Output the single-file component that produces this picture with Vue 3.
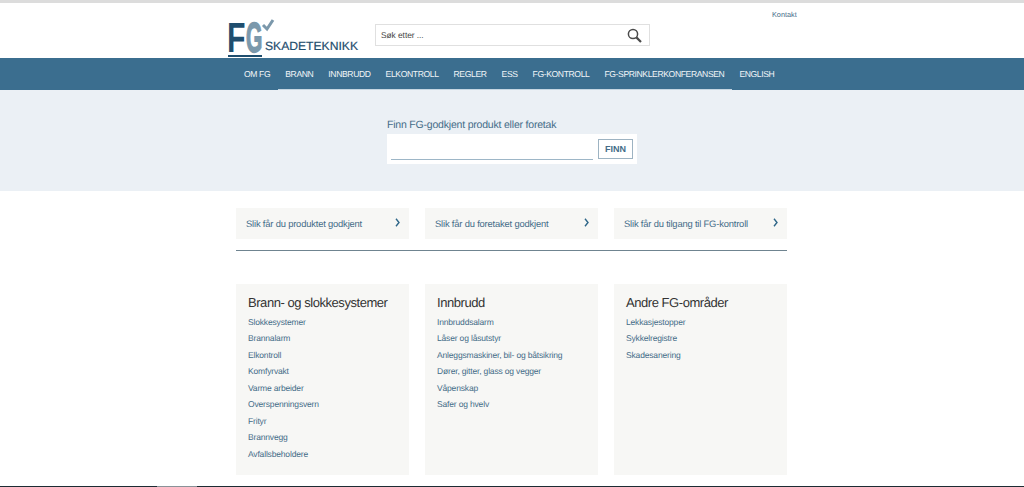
<template>
  <div class="page">
    <header class="top">
      <a class="logo" href="#">
        <svg width="135" height="50" viewBox="0 -6 135 50">
          <text transform="translate(-1 33) scale(0.72 1)" class="logo-f">F</text>
          <text transform="translate(18 33) scale(0.5 1)" class="logo-g">G</text>
          <rect x="0" y="36" width="34" height="2" fill="#1f4e6e" />
          <path d="M35 6 L39 10 L45 1" fill="none" stroke="#7b98ab" stroke-width="3" />
          <text x="37" y="31" class="logo-word" textLength="93" lengthAdjust="spacingAndGlyphs">SKADETEKNIKK</text>
        </svg>
      </a>
      <div class="search">
        <span>Søk etter ...</span>
        <svg width="15" height="15" viewBox="0 0 15 15">
          <circle cx="6" cy="6" r="4.6" fill="none" stroke="#4a4a4a" stroke-width="1.5" />
          <path d="M9.4 9.4 L14 14" stroke="#4a4a4a" stroke-width="2.2" />
        </svg>
      </div>
      <a class="kontakt" href="#">Kontakt</a>
    </header>

    <nav class="nav">
      <a v-for="item in navItems" :key="item" href="#" :class="{ marked: item !== 'OM FG' && item !== 'ENGLISH' }">{{ item }}</a>
    </nav>

    <section class="hero">
      <label>Finn FG-godkjent produkt eller foretak</label>
      <div class="finder">
        <div class="finder-input"></div>
        <button type="button">FINN</button>
      </div>
    </section>

    <main class="content">
      <div class="shortcuts">
        <a v-for="s in shortcuts" :key="s" href="#" class="shortcut">
          <span>{{ s }}</span>
          <svg width="5" height="9" viewBox="0 0 5 9">
            <path d="M1 0.8 L4 4.5 L1 8.2" fill="none" stroke="#2f6688" stroke-width="1.4" />
          </svg>
        </a>
      </div>
      <div class="rule"></div>
      <div class="areas">
        <div v-for="a in areas" :key="a.title" class="area">
          <h2>{{ a.title }}</h2>
          <a v-for="l in a.links" :key="l" href="#">{{ l }}</a>
        </div>
      </div>
    </main>

    <div class="bottom"><i></i></div>
  </div>
</template>

<script setup>
const navItems = ['OM FG', 'BRANN', 'INNBRUDD', 'ELKONTROLL', 'REGLER', 'ESS', 'FG-KONTROLL', 'FG-SPRINKLERKONFERANSEN', 'ENGLISH']

const shortcuts = [
  'Slik får du produktet godkjent',
  'Slik får du foretaket godkjent',
  'Slik får du tilgang til FG-kontroll'
]

const areas = [
  {
    title: 'Brann- og slokkesystemer',
    links: ['Slokkesystemer', 'Brannalarm', 'Elkontroll', 'Komfyrvakt', 'Varme arbeider', 'Overspenningsvern', 'Frityr', 'Brannvegg', 'Avfallsbeholdere']
  },
  {
    title: 'Innbrudd',
    links: ['Innbruddsalarm', 'Låser og låsutstyr', 'Anleggsmaskiner, bil- og båtsikring', 'Dører, gitter, glass og vegger', 'Våpenskap', 'Safer og hvelv']
  },
  {
    title: 'Andre FG-områder',
    links: ['Lekkasjestopper', 'Sykkelregistre', 'Skadesanering']
  }
]
</script>

<style>
html, body {
  margin: 0;
  height: 487px;
  overflow: hidden;
  background: #fff;
}
</style>

<style scoped>
.page {
  height: 487px;
  display: flex;
  flex-direction: column;
  font-family: "Liberation Sans", Arial, sans-serif;
  text-rendering: geometricPrecision;
  border-top: 3px solid #dcdcdc;
  box-sizing: border-box;
  color: #446c88;
}

a {
  color: inherit;
  text-decoration: none;
}

.top {
  height: 55px;
  display: flex;
  padding-left: 228px;
}

.logo {
  width: 147px;
  height: 45px;
  padding-top: 10px;
}

.logo svg {
  display: block;
  overflow: visible;
}

.logo-f {
  font: bold 42px "Liberation Sans", sans-serif;
  fill: #1f4e6e;
}

.logo-g {
  font: bold 42px "Liberation Sans", sans-serif;
  fill: #7b98ab;
  stroke: #7b98ab;
  stroke-width: 1.6;
}

.logo-word {
  font: 12px "Liberation Sans", sans-serif;
  fill: #1f4e6e;
  stroke: #1f4e6e;
  stroke-width: 0.2;
}

.search {
  width: 275px;
  height: 22px;
  margin-top: 21px;
  box-sizing: border-box;
  border: 1px solid #e0e0e0;
  display: flex;
  align-items: center;
  justify-content: space-between;
  padding: 0 7px 0 5px;
  font-size: 8.4px;
  letter-spacing: -0.05px;
  color: #444;
}

.kontakt {
  margin-left: 122px;
  margin-top: 7px;
  font-size: 7.3px;
  height: 9px;
}

.nav {
  height: 32px;
  background: #3b6e8f;
  display: flex;
  padding-left: 236.5px;
  flex-shrink: 0;
}

.nav a {
  padding: 0 7.5px;
  height: 32px;
  line-height: 32px;
  box-sizing: border-box;
  font-size: 8.6px;
  letter-spacing: -0.39px;
  color: #f1f5f8;
}

.nav a.marked {
  border-bottom: 1px solid #c5d6e2;
}

.hero {
  height: 101px;
  background: #ebf0f5;
  box-sizing: border-box;
  padding: 28px 0 0 387px;
  flex-shrink: 0;
}

.hero label {
  display: block;
  font-size: 10.5px;
  letter-spacing: -0.2px;
  line-height: 13px;
  padding-top: 1px;
}

.finder {
  width: 250px;
  height: 30px;
  margin-top: 2px;
  background: #fff;
  display: flex;
  box-sizing: border-box;
  padding: 5px 4px 4px;
  gap: 5px;
}

.finder-input {
  flex: 1;
  border-bottom: 1px solid #9db6c7;
}

.finder button {
  width: 35px;
  height: 20px;
  padding: 0;
  background: #fff;
  border: 1px solid #9db3c2;
  font: bold 9px "Liberation Sans", sans-serif;
  color: #446c88;
}

.content {
  width: 551px;
  margin-left: 236px;
  padding-top: 17px;
}

.shortcuts, .areas {
  display: grid;
  grid-template-columns: repeat(3, 173px);
  gap: 16px;
}

.shortcut {
  height: 31px;
  background: #f7f7f5;
  display: flex;
  align-items: center;
  justify-content: space-between;
  padding: 0 9px 0 10px;
  font-size: 9.4px;
  letter-spacing: -0.18px;
  box-sizing: border-box;
}

.shortcut svg {
  margin-top: -2px;
}

.rule {
  height: 1px;
  background: #6f8490;
  margin: 11px 0 33px;
}

.area {
  height: 191px;
  background: #f7f7f5;
  box-sizing: border-box;
  padding: 11px 12px;
}

.area h2 {
  margin: 0 0 3px;
  font-size: 13px;
  letter-spacing: -0.45px;
  font-weight: normal;
  line-height: 16px;
  white-space: nowrap;
  color: #333;
}

.area a {
  display: block;
  font-size: 8.5px;
  letter-spacing: -0.17px;
  line-height: 16.45px;
}

.bottom {
  margin-top: auto;
  height: 1px;
  background: #1d2b33;
  position: relative;
}

.bottom i {
  position: absolute;
  left: 157px;
  width: 40px;
  top: 0;
  height: 1px;
  background: #8a9298;
}
</style>
